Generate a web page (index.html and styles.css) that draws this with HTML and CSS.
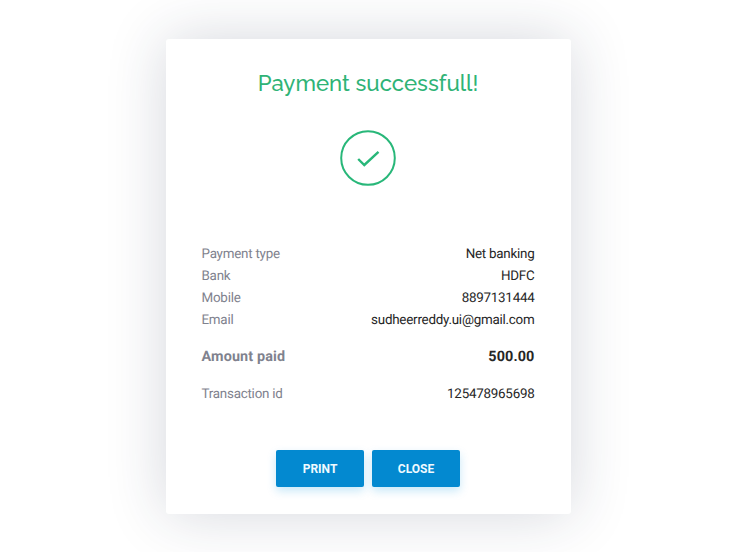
FILE: index.html
```html
<!DOCTYPE html>
<html lang="en">
<head>
<meta charset="utf-8">
<title>Payment</title>
<link rel="stylesheet" href="styles.css">
</head>
<body>
<main class="card">
  <h1 class="title">Payment successfull!</h1>
  <svg class="check" viewBox="0 0 56 56" width="56" height="56" aria-hidden="true">
    <circle cx="28" cy="28" r="26.8"/>
    <path d="M18.2 29 L24.3 35 L38.5 21.8"/>
  </svg>
  <dl class="details">
    <div class="row"><dt>Payment type</dt><dd>Net banking</dd></div>
    <div class="row"><dt>Bank</dt><dd>HDFC</dd></div>
    <div class="row"><dt>Mobile</dt><dd>8897131444</dd></div>
    <div class="row"><dt>Email</dt><dd>sudheerreddy.ui@gmail.com</dd></div>
    <div class="row total"><dt>Amount paid</dt><dd>500.00</dd></div>
    <div class="row"><dt>Transaction id</dt><dd>125478965698</dd></div>
  </dl>
  <div class="actions">
    <button class="btn" type="button">PRINT</button>
    <button class="btn" type="button">CLOSE</button>
  </div>
</main>
</body>
</html>
```

FILE: styles.css
```css
* { box-sizing: border-box; }
body {
  margin: 0;
  height: 552px;
  overflow: hidden;
  background: #fff;
  font-family: Roboto, sans-serif;
}
.card {
  display: flex;
  flex-direction: column;
  align-items: center;
  width: 405px;
  height: 475px;
  margin: 39px 0 0 165.5px;
  padding: 29px 36px 0;
  border-radius: 3px;
  background: #fff;
  box-shadow: 0 0 60px rgba(30, 45, 75, 0.19);
}
.title {
  margin: 0;
  font: 500 22.2px/30px Raleway, Lato, sans-serif;
  color: #2fb376;
  white-space: nowrap;
}
.check {
  margin-top: 32px;
  fill: none;
  stroke: #28b779;
  stroke-width: 2;
}
.check path { stroke-width: 2.4; }
.details {
  width: 100%;
  margin: 58px 0 0;
  font-size: 13.4px;
  line-height: 22px;
  letter-spacing: -0.24px;
  text-rendering: geometricPrecision;
}
.row {
  display: flex;
  justify-content: space-between;
}
dt { color: #7f828e; }
dd { margin: 0; color: #262626; }
.total {
  margin: 14px 0 16px;
  font-size: 14.4px;
  font-weight: 700;
  letter-spacing: 0.13px;
}
.actions {
  display: flex;
  gap: 8px;
  margin-top: 44px;
}
.btn {
  width: 88px;
  height: 37px;
  padding: 0;
  border: 0;
  border-radius: 2px;
  background: #0389d0;
  color: #f0faff;
  font: 700 12px Roboto, sans-serif;
  box-shadow: 0 4px 10px rgba(2, 150, 225, 0.22);
}
```
